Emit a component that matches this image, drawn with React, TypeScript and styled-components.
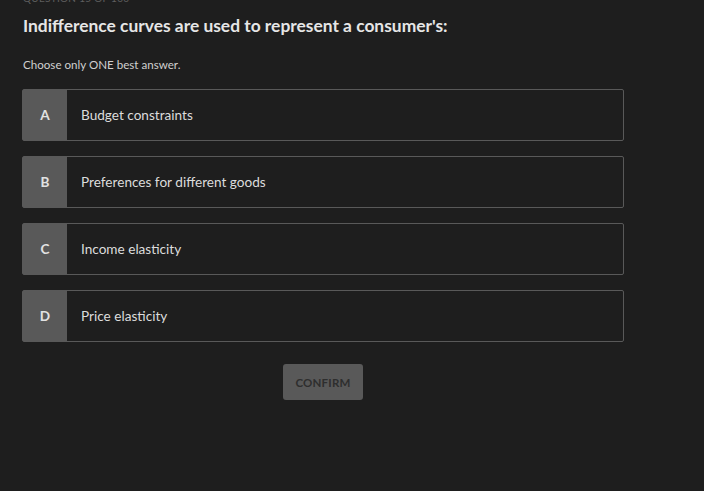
import React, { useState } from "react";
import styled, { createGlobalStyle } from "styled-components";

const GlobalStyle = createGlobalStyle`
  html, body {
    margin: 0;
    padding: 0;
    background: #1e1e1e;
    font-family: "Source Sans Pro", "Lato", "Noto Sans", sans-serif;
  }
`;

const Page = styled.div`
  width: 602px;
  padding: 0 22px;
  margin-top: -8px;
`;

const Counter = styled.div`
  font-size: 10px;
  letter-spacing: 0.3px;
  color: #5f5f5f;
  height: 12px;
  line-height: 12px;
  padding-left: 1px;
`;

const Question = styled.h1`
  margin: 11px 0 0;
  font-size: 17.4px;
  font-weight: 700;
  color: #e6e6e6;
  line-height: 22px;
  padding-left: 1px;
`;

const Hint = styled.p`
  margin: 21px 0 0;
  font-size: 11.6px;
  color: #d0d0d0;
  line-height: 14px;
  padding-left: 1px;
`;

const Options = styled.div`
  margin-top: 17px;
  display: flex;
  flex-direction: column;
  gap: 15px;
`;

const Option = styled.button<{ $selected: boolean }>`
  display: flex;
  align-items: stretch;
  width: 602px;
  height: 52px;
  padding: 0;
  background: ${(p) => (p.$selected ? "#2a2a2a" : "#1e1e1e")};
  border: 1px solid ${(p) => (p.$selected ? "#8a8a8a" : "#595959")};
  border-radius: 2px;
  cursor: pointer;
  font-family: inherit;
  text-align: left;
`;

const Letter = styled.span`
  width: 44px;
  flex: none;
  display: flex;
  align-items: center;
  justify-content: center;
  background: #595959;
  color: #e2e2e2;
  font-size: 13.6px;
  font-weight: 700;
`;

const Label = styled.span`
  display: flex;
  align-items: center;
  padding-left: 14px;
  color: #dcdcdc;
  font-size: 13.6px;
`;

const Footer = styled.div`
  display: flex;
  justify-content: center;
  margin-top: 22px;
`;

const Confirm = styled.button`
  width: 80px;
  height: 36px;
  border: none;
  border-radius: 3px;
  background: #595959;
  color: #2e2e2e;
  font-family: inherit;
  font-size: 11.5px;
  font-weight: 700;
  letter-spacing: 0.2px;
  cursor: pointer;
`;

const answers = [
  { key: "A", text: "Budget constraints" },
  { key: "B", text: "Preferences for different goods" },
  { key: "C", text: "Income elasticity" },
  { key: "D", text: "Price elasticity" },
];

export default function App() {
  const [picked, setPicked] = useState<string | null>(null);
  return (
    <>
      <GlobalStyle />
      <Page>
        <Counter>QUESTION 15 OF 100</Counter>
        <Question>Indifference curves are used to represent a consumer's:</Question>
        <Hint>Choose only ONE best answer.</Hint>
        <Options>
          {answers.map((a) => (
            <Option
              key={a.key}
              $selected={picked === a.key}
              onClick={() => setPicked(a.key)}
            >
              <Letter>{a.key}</Letter>
              <Label>{a.text}</Label>
            </Option>
          ))}
        </Options>
        <Footer>
          <Confirm disabled={!picked}>CONFIRM</Confirm>
        </Footer>
      </Page>
    </>
  );
}
